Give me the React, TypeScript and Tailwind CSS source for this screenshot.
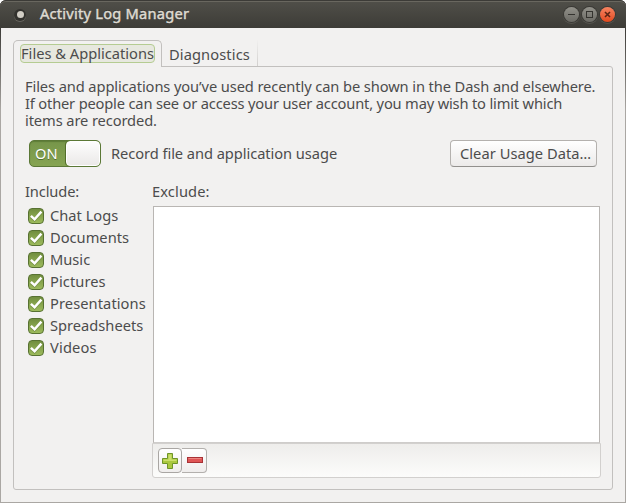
import React from "react";

const categories = [
  { label: "Chat Logs", tracking: "tracking-[0px]" },
  { label: "Documents", tracking: "tracking-[0px]" },
  { label: "Music", tracking: "tracking-[0px]" },
  { label: "Pictures", tracking: "tracking-[0.08px]" },
  { label: "Presentations", tracking: "tracking-[0.08px]" },
  { label: "Spreadsheets", tracking: "tracking-[0px]" },
  { label: "Videos", tracking: "tracking-[0.15px]" },
];

function WindowButton({ kind }: { kind: "min" | "max" | "close" }) {
  const close = kind === "close";
  return (
    <span
      className={
        "flex size-[15px] items-center justify-center rounded-full shadow-[0_0_0_1px_#3a3935,0_1px_0_1px_#56554f] " +
        (close ? "bg-linear-to-b from-[#f58360] to-[#e2481a]" : "bg-linear-to-b from-[#92918a] to-[#6c6b65]")
      }
    >
      <svg width="15" height="15" viewBox="0 0 15 15" fill="none" stroke={close ? "#5a2413" : "#34332f"} shapeRendering={close ? "auto" : "crispEdges"}>
        {kind === "min" && <path d="M4 7.5h7" />}
        {kind === "max" && <rect x="4.5" y="4.5" width="6" height="6" />}
        {close && <path d="M5 5l5 5M10 5l-5 5" strokeWidth="1.6" />}
      </svg>
    </span>
  );
}

function CheckBox() {
  return (
    <span className="size-4 shrink-0 rounded-[4px] border border-[#587232] bg-linear-to-b from-[#718e3f] to-[#9dbb5c]">
      <svg width="14" height="14" viewBox="0 0 14 14" fill="none">
        <path d="M2 8l3.6 3.2L12 4" stroke="#4f692b" strokeOpacity=".45" strokeWidth="2.4" />
        <path d="M1.9 6.8l3.7 3.5L12.4 2.7" stroke="#fff" strokeWidth="2.5" />
      </svg>
    </span>
  );
}

export default function App() {
  return (
    <div className="h-[503px] w-[626px] overflow-hidden bg-white font-['Noto_Sans',sans-serif] text-[14.67px] whitespace-nowrap text-[#4c4c4c]">
      <div className="flex h-full flex-col rounded-t-[6px] bg-linear-to-b from-[#3c3b37] from-[28px] to-[#aaa7a3] to-[110px] px-px pb-px">
        <header className="-mx-px flex h-7 shrink-0 items-center rounded-t-[6px] border-t border-[#3c3b37] bg-linear-to-b from-[#504f49] to-[#3d3c37] pr-[11px] pl-[14px] shadow-[inset_0_1px_0_#69675f]">
          <span className="flex size-3 items-center justify-center rounded-full bg-[#33322e] shadow-[0_1px_0_#68665f]">
            <span className="size-[7px] rounded-full bg-[#d2cec5]" />
          </span>
          <h1 className="ml-[14px] flex-1 pb-[3px] text-[14.67px] leading-5 tracking-[0.22px] text-[#dfdbd2] [-webkit-text-stroke:0.45px_#dfdbd2] [text-shadow:0_-1px_0_#2c2b28]">
            Activity Log Manager
          </h1>
          <div className="flex gap-[3px]">
            <WindowButton kind="min" />
            <WindowButton kind="max" />
            <WindowButton kind="close" />
          </div>
        </header>

        <main className="flex flex-1 flex-col bg-[#f2f1f0] px-3 pt-3 pb-3">
          <nav className="flex h-[26px] shrink-0">
            <div className="z-10 -mb-px w-[149px] rounded-t-[5px] border border-b-0 border-[#c2c0be] bg-[#f2f1f0] pt-[3px] pl-[6px]">
              <div className="h-[19px] w-[135px] rounded-[4px] border border-[#b5cc92] bg-[#e7e8df] leading-[16px] tracking-[0px]">
                Files &amp; Applications
              </div>
            </div>
            <div className="w-[96px] border-r border-[#d8d6d4] pt-[4px] pl-[7px] leading-5 tracking-[0.1px] [border-image:linear-gradient(transparent,#d0cecc)_1]">Diagnostics</div>
          </nav>

          <section className="flex flex-1 flex-col rounded-[3px] rounded-tl-none border border-[#c2c0be] pr-[11px] pb-[11px] pl-[11px]">
            <p className="pt-[11px] leading-[17px]">
              <span className="block tracking-[-0.1px]">Files and applications you’ve used recently can be shown in the Dash and elsewhere.</span>
              <span className="block tracking-[-0.17px]">If other people can see or access your user account, you may wish to limit which</span>
              <span className="block tracking-[-0.1px]">items are recorded.</span>
            </p>

            <div className="mt-[11px] flex h-[27px] items-center pr-[4px] pl-[4px]">
              <div className="flex h-[27px] w-[72px] rounded-[5px] border border-[#5b7836] bg-linear-to-b from-[#76954a] to-[#86a452] shadow-[inset_0_1px_1px_#5f7d38]">
                <span className="w-9 pl-[5px] leading-[25px] tracking-[0px] text-white [text-shadow:0_1px_0_#526d2b]">ON</span>
                <span className="h-[25px] flex-1 rounded-[4px] border border-white bg-linear-to-b from-[#fdfdfd] to-[#ebe9e8] shadow-[-1px_0_0_#526d2b]" />
              </div>
              <span className="ml-[10px] flex-1 pb-px leading-5 tracking-[-0.06px]">Record file and application usage</span>
              <button className="h-[27px] w-[147px] rounded-[4px] border border-[#b4b1ae] border-b-[#92908d] bg-linear-to-b from-white to-[#eceae9] pb-px pl-[9px] text-left leading-[24px] tracking-[0.04px]">
                Clear Usage Data…
              </button>
            </div>

            <div className="mt-[14px] flex flex-1">
              <div className="w-[127px]">
                <h2 className="h-6 leading-5 tracking-[-0.12px]">Include:</h2>
                <ul className="pl-[3px]">
                  {categories.map((c) => (
                    <li key={c.label} className="flex h-[22px] items-center gap-[6px]">
                      <CheckBox />
                      <span className={"pb-[2px] leading-5 " + c.tracking}>{c.label}</span>
                    </li>
                  ))}
                </ul>
              </div>
              <div className="flex flex-1 flex-col">
                <h2 className="h-[25px] leading-5 tracking-[0.12px]">Exclude:</h2>
                <div className="mx-px h-[237px] border border-[#b9b6b3] border-b-[#cfcdcb] bg-white" />
                <div className="flex h-[35px] w-[449px] rounded-b-[3px] border border-[#d2d0ce] bg-linear-to-b from-[#eeedeb] to-[#fcfcfb] pt-[4px] pl-[5px]">
                  <button className="flex h-[25px] w-6 items-center justify-center rounded-[4px] border border-[#a9a6a3] bg-linear-to-b from-white to-[#efedec]">
                    <svg width="18" height="18" viewBox="0 0 18 18" className="shrink-0">
                      <path d="M6.5 1.5h5v5h5v5h-5v5h-5v-5h-5v-5h5z" fill="#aac83f" stroke="#6e9428" />
                      <path d="M7.5 2.5h3v5h5v1.5h-13V7.5h5z" fill="#cbdf6c" />
                    </svg>
                  </button>
                  <button className="flex h-[25px] w-[25px] items-center justify-center rounded-r-[4px] border border-l-0 border-[#b3b0ad] bg-linear-to-b from-white to-[#efedec] pl-[2px]">
                    <svg width="17" height="7" viewBox="0 0 17 7" className="shrink-0">
                      <rect x=".5" y=".5" width="15" height="5" fill="#df5555" stroke="#a83236" />
                      <path d="M1.5 1.5h13" stroke="#ee8580" />
                    </svg>
                  </button>
                </div>
              </div>
            </div>
          </section>
        </main>
      </div>
    </div>
  );
}
